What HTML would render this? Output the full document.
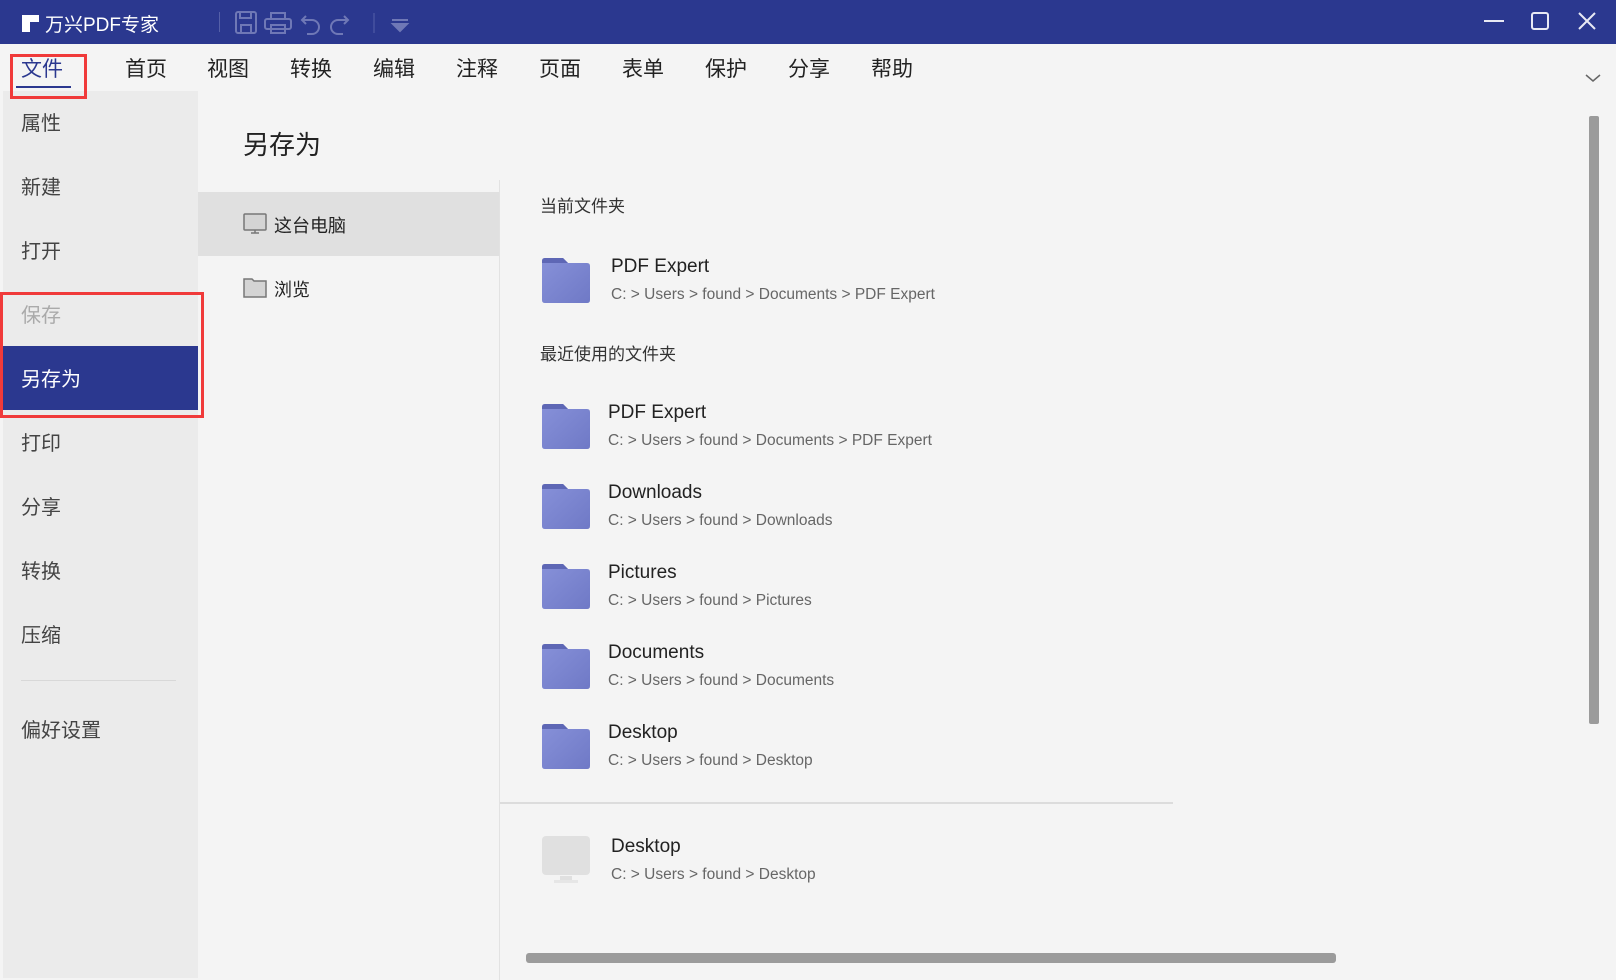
<!DOCTYPE html>
<html><head><meta charset="utf-8"><style>
*{margin:0;padding:0;box-sizing:border-box}
body{width:1616px;height:980px;background:#f4f4f4;position:relative;overflow:hidden;font-family:"Liberation Sans","Noto Sans CJK SC",sans-serif;color:#222}
.a{position:absolute;white-space:nowrap}
.title{left:0;top:0;width:1616px;height:44px;background:#2b388f}
.menu{font-size:21px;top:53px;color:#222}
.side{font-size:20px;color:#444;left:21px}
.fold{position:absolute;width:48px;height:45px}
.t{font-size:19px;color:#222}
.p{font-size:15.5px;color:#666}
.h{font-size:17px;color:#333}
</style></head><body>
<div class="a title"></div>
<svg class="a" style="left:22px;top:15px" width="18" height="18"><rect x="0" y="0" width="17" height="7" fill="#fff"/><rect x="0" y="7" width="8" height="10" fill="#fff"/></svg>
<div class="a" style="left:45px;top:10px;font-size:19px;color:#fff">万兴PDF专家</div>
<div class="a" style="left:219px;top:12px;width:1px;height:20px;background:#5560a8"></div>
<svg class="a" style="left:234px;top:10px" width="180" height="26" fill="none" stroke="#6f78b6" stroke-width="2">
<rect x="2" y="2" width="20" height="21" rx="2"/><rect x="6" y="2" width="11" height="6"/><rect x="7" y="15" width="10" height="8"/>
<rect x="37" y="3" width="14" height="6"/><rect x="31" y="9" width="26" height="10" rx="2"/><rect x="37" y="15" width="14" height="8"/>
<path d="M72 6 L68 10 L72 14 M68 10 H78 a7 7 0 0 1 0 14 H73"/>
<path d="M110 6 L114 10 L110 14 M114 10 H104 a7 7 0 0 0 0 14 H109"/>
<path d="M140 3 V23" stroke="#5560a8" stroke-width="1"/>
<path d="M158 10 H174 M159 14 L166 21 L173 14 Z" fill="#6f78b6"/>
</svg>
<svg class="a" style="left:1480px;top:10px" width="136" height="26" fill="none" stroke="#e8e9f4" stroke-width="2">
<path d="M4 11 H24"/><rect x="52" y="3" width="16" height="16" rx="2"/><path d="M99 3 L115 19 M115 3 L99 19"/>
</svg>
<div class="a" style="left:3px;top:91px;width:195px;height:887px;background:#ebebeb"></div>
<div class="a menu" style="left:21px;color:#2b388f">文件</div>
<div class="a" style="left:16px;top:86px;width:55px;height:2px;background:#2b388f"></div>
<div class="a" style="left:10px;top:54px;width:77px;height:45px;border:3px solid #f03a3a;z-index:5"></div>
<div class="a menu" style="left:125px">首页</div>
<div class="a menu" style="left:207px">视图</div>
<div class="a menu" style="left:290px">转换</div>
<div class="a menu" style="left:373px">编辑</div>
<div class="a menu" style="left:456px">注释</div>
<div class="a menu" style="left:539px">页面</div>
<div class="a menu" style="left:622px">表单</div>
<div class="a menu" style="left:705px">保护</div>
<div class="a menu" style="left:788px">分享</div>
<div class="a menu" style="left:871px">帮助</div>
<svg class="a" style="left:1584px;top:72px" width="18" height="12"><path d="M2 3 L9 9 L16 3" fill="none" stroke="#666" stroke-width="1.5"/></svg>
<div class="a side" style="top:107px">属性</div>
<div class="a side" style="top:171px">新建</div>
<div class="a side" style="top:235px">打开</div>
<div class="a side" style="top:299px;color:#aaa">保存</div>
<div class="a" style="left:3px;top:346px;width:195px;height:64px;background:#2b388f"></div>
<div class="a side" style="top:363px;color:#fff">另存为</div>
<div class="a" style="left:0;top:292px;width:204px;height:126px;border:3px solid #f03a3a"></div>
<div class="a side" style="top:427px">打印</div>
<div class="a side" style="top:491px">分享</div>
<div class="a side" style="top:555px">转换</div>
<div class="a side" style="top:619px">压缩</div>
<div class="a" style="left:21px;top:680px;width:155px;height:1px;background:#d8d8d8"></div>
<div class="a side" style="top:714px">偏好设置</div>
<div class="a" style="left:243px;top:125px;font-size:26px;color:#222">另存为</div>
<div class="a" style="left:198px;top:192px;width:301px;height:64px;background:#e0e0e0"></div>
<svg class="a" style="left:243px;top:213px" width="24" height="22" fill="#d4d4d4" stroke="#777" stroke-width="1.5"><rect x="1" y="1" width="22" height="16" rx="1"/><path d="M8 20 H16 M12 17 V20"/></svg>
<div class="a" style="left:274px;top:212px;font-size:18px">这台电脑</div>
<svg class="a" style="left:243px;top:277px" width="24" height="21" fill="#d4d4d4" stroke="#777" stroke-width="1.5"><path d="M1 2 H9 L11 4 H23 V20 H1 Z"/></svg>
<div class="a" style="left:274px;top:276px;font-size:18px">浏览</div>
<div class="a" style="left:499px;top:180px;width:1px;height:800px;background:#e2e2e2"></div>
<div class="a h" style="left:540px;top:192px">当前文件夹</div>
<div class="a h" style="left:540px;top:340px">最近使用的文件夹</div>
<svg width="0" height="0" style="position:absolute"><defs><linearGradient id="g" x1="0" y1="0" x2="1" y2="1"><stop offset="0" stop-color="#8791d9"/><stop offset="1" stop-color="#6f79c6"/></linearGradient></defs></svg>
<svg class="fold" style="left:542px;top:258px"><path d="M0 3 Q0 0 3 0 H21 L26 5 H45 Q48 5 48 8 V42 Q48 45 45 45 H3 Q0 45 0 42Z" fill="url(#g)"/><path d="M0 3 Q0 0 3 0 H21 L26 5 H0Z" fill="#5e67b5"/></svg>
<div class="a t" style="left:611px;top:256px">PDF Expert</div>
<div class="a p" style="left:611px;top:286px">C: &gt; Users &gt; found &gt; Documents &gt; PDF Expert</div>

<svg class="fold" style="left:542px;top:404px"><path d="M0 3 Q0 0 3 0 H21 L26 5 H45 Q48 5 48 8 V42 Q48 45 45 45 H3 Q0 45 0 42Z" fill="url(#g)"/><path d="M0 3 Q0 0 3 0 H21 L26 5 H0Z" fill="#5e67b5"/></svg>
<div class="a t" style="left:608px;top:402px">PDF Expert</div>
<div class="a p" style="left:608px;top:432px">C: &gt; Users &gt; found &gt; Documents &gt; PDF Expert</div>

<svg class="fold" style="left:542px;top:484px"><path d="M0 3 Q0 0 3 0 H21 L26 5 H45 Q48 5 48 8 V42 Q48 45 45 45 H3 Q0 45 0 42Z" fill="url(#g)"/><path d="M0 3 Q0 0 3 0 H21 L26 5 H0Z" fill="#5e67b5"/></svg>
<div class="a t" style="left:608px;top:482px">Downloads</div>
<div class="a p" style="left:608px;top:512px">C: &gt; Users &gt; found &gt; Downloads</div>

<svg class="fold" style="left:542px;top:564px"><path d="M0 3 Q0 0 3 0 H21 L26 5 H45 Q48 5 48 8 V42 Q48 45 45 45 H3 Q0 45 0 42Z" fill="url(#g)"/><path d="M0 3 Q0 0 3 0 H21 L26 5 H0Z" fill="#5e67b5"/></svg>
<div class="a t" style="left:608px;top:562px">Pictures</div>
<div class="a p" style="left:608px;top:592px">C: &gt; Users &gt; found &gt; Pictures</div>

<svg class="fold" style="left:542px;top:644px"><path d="M0 3 Q0 0 3 0 H21 L26 5 H45 Q48 5 48 8 V42 Q48 45 45 45 H3 Q0 45 0 42Z" fill="url(#g)"/><path d="M0 3 Q0 0 3 0 H21 L26 5 H0Z" fill="#5e67b5"/></svg>
<div class="a t" style="left:608px;top:642px">Documents</div>
<div class="a p" style="left:608px;top:672px">C: &gt; Users &gt; found &gt; Documents</div>

<svg class="fold" style="left:542px;top:724px"><path d="M0 3 Q0 0 3 0 H21 L26 5 H45 Q48 5 48 8 V42 Q48 45 45 45 H3 Q0 45 0 42Z" fill="url(#g)"/><path d="M0 3 Q0 0 3 0 H21 L26 5 H0Z" fill="#5e67b5"/></svg>
<div class="a t" style="left:608px;top:722px">Desktop</div>
<div class="a p" style="left:608px;top:752px">C: &gt; Users &gt; found &gt; Desktop</div>

<div class="a" style="left:500px;top:802px;width:673px;height:2px;background:#dcdcdc"></div>
<svg class="a" style="left:542px;top:836px" width="48" height="48"><rect x="0" y="0" width="48" height="39" rx="4" fill="#e0e0e0"/><rect x="18" y="40" width="12" height="4" fill="#e0e0e0"/><rect x="12" y="44" width="24" height="3" fill="#e6e6e6"/></svg>
<div class="a t" style="left:611px;top:836px">Desktop</div>
<div class="a p" style="left:611px;top:866px">C: &gt; Users &gt; found &gt; Desktop</div>
<div class="a" style="left:526px;top:953px;width:810px;height:10px;border-radius:3px;background:#9b9b9b"></div>
<div class="a" style="left:1589px;top:116px;width:10px;height:608px;border-radius:2px;background:#9b9b9b"></div>
</body></html>
